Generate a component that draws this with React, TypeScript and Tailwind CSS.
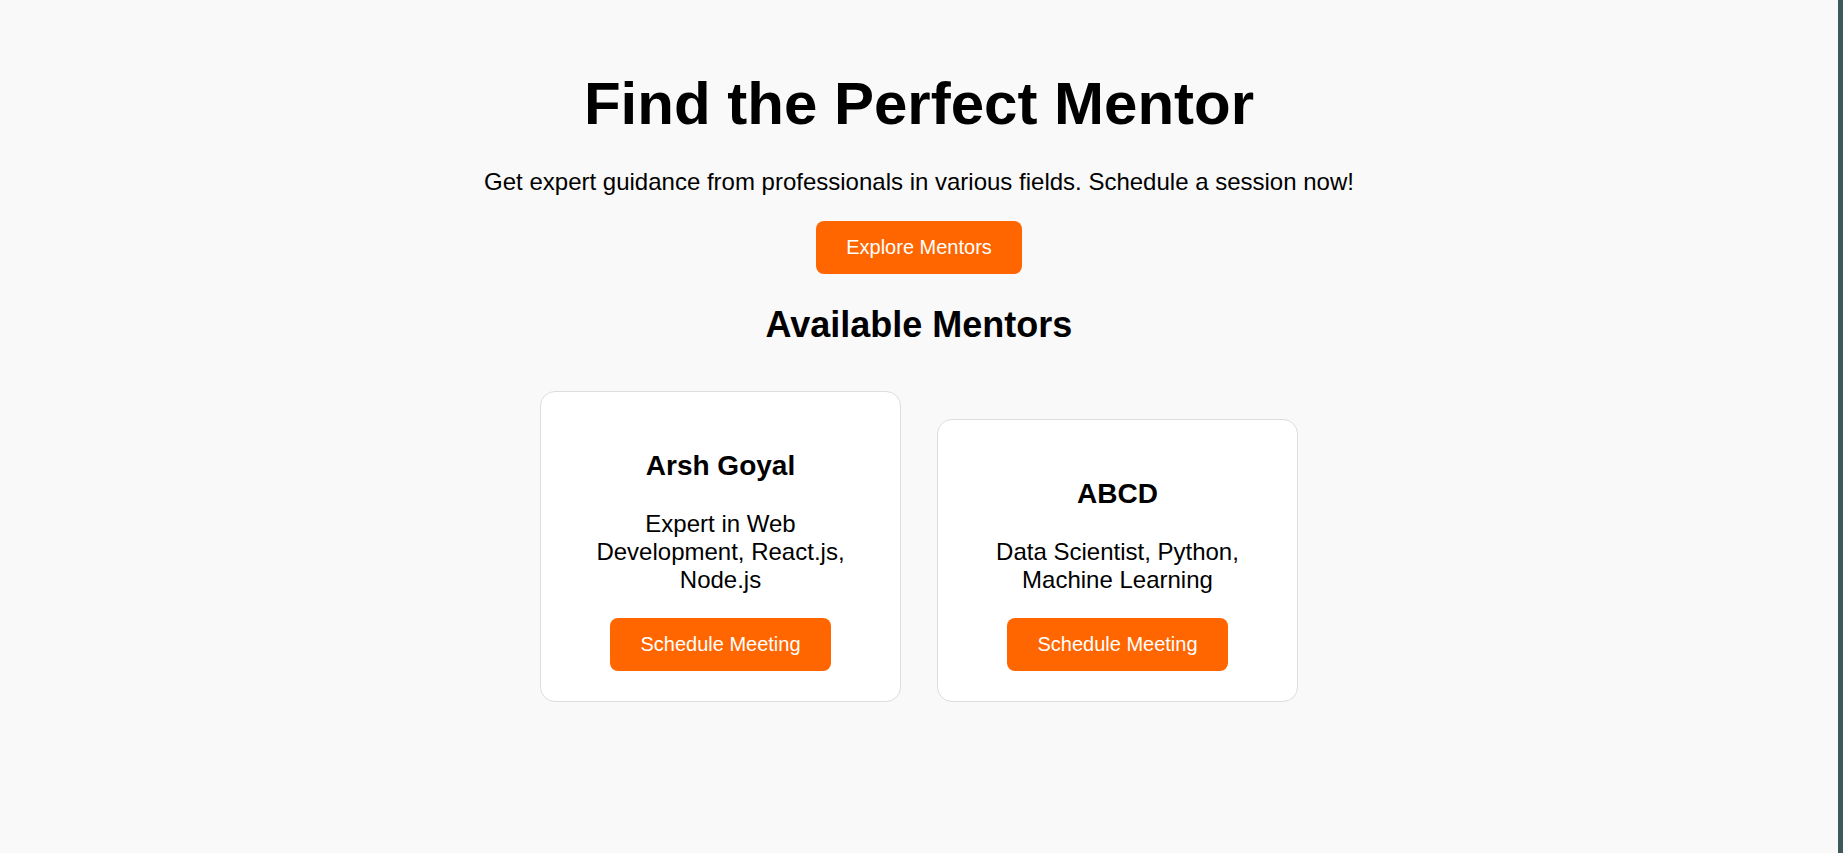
const mentors = [
  { name: "Arsh Goyal", skills: "Expert in Web Development, React.js, Node.js" },
  { name: "ABCD", skills: "Data Scientist, Python, Machine Learning" },
];

function MentorCard({ name, skills }: { name: string; skills: string }) {
  return (
    <div className="w-[361px] rounded-[15px] border border-[#dddddd] bg-white p-[30px] text-center">
      <h3 className="mt-[28px] mb-[28px] text-[28px] font-bold leading-[32px] text-black">{name}</h3>
      <p className="mb-[24px] text-[24px] leading-[28px] text-black">{skills}</p>
      <button className="rounded-[8px] bg-[#ff6600] px-[30px] py-[15px] text-[20px] leading-[23px] text-white">
        Schedule Meeting
      </button>
    </div>
  );
}

export default function App() {
  return (
    <div className="flex min-h-screen bg-[#f9f9f9] font-['Liberation_Sans',Arial,sans-serif]">
      <main className="flex flex-1 flex-col items-center pt-[69px] text-center">
        {/* hero */}
        <h1 className="text-[60px] font-bold leading-[69px] text-black">Find the Perfect Mentor</h1>
        <p className="mt-[30px] text-[24px] leading-[28px] text-black">
          Get expert guidance from professionals in various fields. Schedule a session now!
        </p>
        <button className="mt-[25px] rounded-[8px] bg-[#ff6600] px-[30px] py-[15px] text-[20px] leading-[23px] text-white">
          Explore Mentors
        </button>

        {/* mentor list */}
        <h2 className="mt-[30px] text-[36px] font-bold leading-[41px] text-black">Available Mentors</h2>
        <div className="mt-[46px] flex items-end justify-center gap-[36px]">
          {mentors.map((m) => (
            <MentorCard key={m.name} name={m.name} skills={m.skills} />
          ))}
        </div>
      </main>
      <div className="w-[5px] shrink-0 bg-[#3d5959]" />
    </div>
  );
}
